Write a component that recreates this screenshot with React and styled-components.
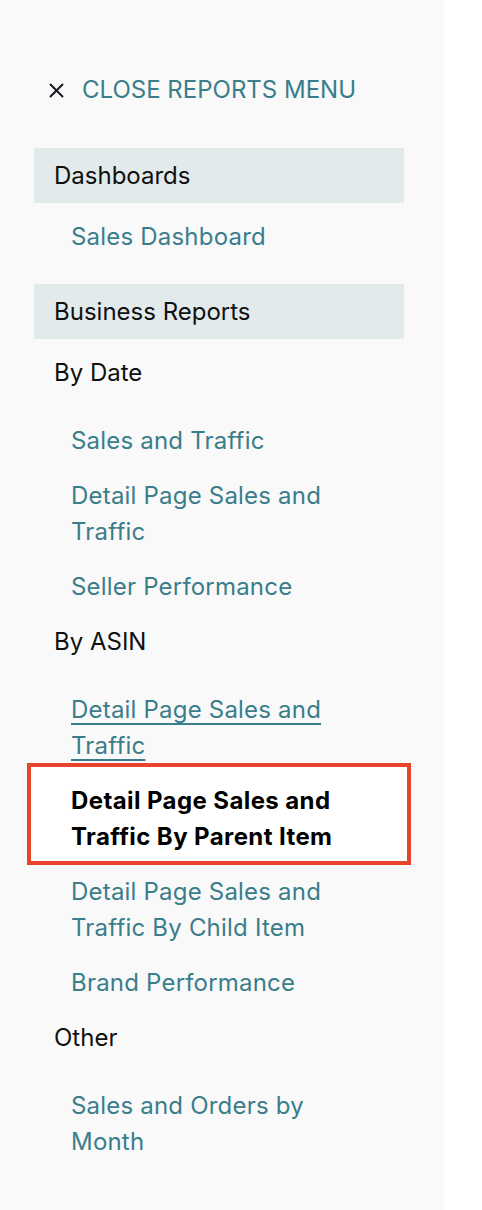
import styled, { createGlobalStyle } from 'styled-components';

const GlobalStyle = createGlobalStyle`
  html, body {
    margin: 0;
    padding: 0;
    background: #ffffff;
  }
  body {
    font-family: Inter, "Liberation Sans", sans-serif;
  }
`;

const menu = [
  {
    title: 'Dashboards',
    groups: [{ links: [{ label: 'Sales Dashboard' }] }],
  },
  {
    title: 'Business Reports',
    groups: [
      {
        label: 'By Date',
        links: [
          { label: 'Sales and Traffic' },
          { label: 'Detail Page Sales and Traffic' },
          { label: 'Seller Performance' },
        ],
      },
      {
        label: 'By ASIN',
        links: [
          { label: 'Detail Page Sales and Traffic', hovered: true },
          { label: 'Detail Page Sales and Traffic By Parent Item', active: true },
          { label: 'Detail Page Sales and Traffic By Child Item' },
          { label: 'Brand Performance' },
        ],
      },
      {
        label: 'Other',
        links: [{ label: 'Sales and Orders by Month' }],
      },
    ],
  },
];

const Sidebar = styled.nav`
  box-sizing: border-box;
  width: 444px;
  min-height: 1210px;
  background: #f9f9f9;
  padding: 72px 40px 40px 34px;
`;

const CloseButton = styled.button`
  display: flex;
  align-items: center;
  gap: 17px;
  margin: 0 0 0 14px;
  padding: 0;
  border: 0;
  background: none;
  cursor: pointer;
  font-family: inherit;
  font-size: 24px;
  line-height: 36px;
  color: #3a7d8b;
  text-transform: uppercase;
`;

const Section = styled.section`
  margin-top: ${props => (props.first ? '40px' : '19px')};
`;

const SectionTitle = styled.div`
  display: flex;
  align-items: center;
  height: 55px;
  padding-left: 20px;
  margin-bottom: 7px;
  background: #e3eaeb;
  color: #0f1111;
  font-size: 24px;
`;

const GroupLabel = styled.div`
  padding: 9px 0 23px 20px;
  color: #0f1111;
  font-size: 24px;
  line-height: 36px;
`;

const LinkList = styled.ul`
  list-style: none;
  margin: 0;
  padding: 0;
`;

const LinkItem = styled.li`
  padding: 9px 56px 10px 37px;
  font-size: 24px;
  line-height: 36px;
  letter-spacing: 0.2px;
`;

const ActiveItem = styled.li`
  margin: -11px -7px 0;
  padding: 16px 56px 6px 40px;
  border: 4px solid #e8432b;
  background: #ffffff;
  font-size: 24px;
  line-height: 36px;
  font-weight: 700;
  letter-spacing: 0.4px;
  color: #000000;
`;

const NavLink = styled.a`
  color: #3a7d8b;
  text-decoration: ${props => (props.hovered ? 'underline' : 'none')};
  text-decoration-thickness: 2px;
  text-underline-offset: 5px;
  cursor: pointer;
`;

const CloseIcon = () => (
  <svg width="17" height="17" viewBox="0 0 17 17" fill="none">
    <path d="M2 2L15 15M15 2L2 15" stroke="#16191f" strokeWidth="2" />
  </svg>
);

const App = () => (
  <>
    <GlobalStyle />
    <Sidebar>
      <CloseButton>
        <CloseIcon />
        Close Reports Menu
      </CloseButton>
      {menu.map((section, i) => (
        <Section key={section.title} first={i === 0}>
          <SectionTitle>{section.title}</SectionTitle>
          {section.groups.map((group, j) => (
            <div key={j}>
              {group.label && <GroupLabel>{group.label}</GroupLabel>}
              <LinkList>
                {group.links.map((link, k) =>
                  link.active ? (
                    <ActiveItem key={k}>{link.label}</ActiveItem>
                  ) : (
                    <LinkItem key={k}>
                      <NavLink hovered={link.hovered}>{link.label}</NavLink>
                    </LinkItem>
                  ),
                )}
              </LinkList>
            </div>
          ))}
        </Section>
      ))}
    </Sidebar>
  </>
);

export default App;
